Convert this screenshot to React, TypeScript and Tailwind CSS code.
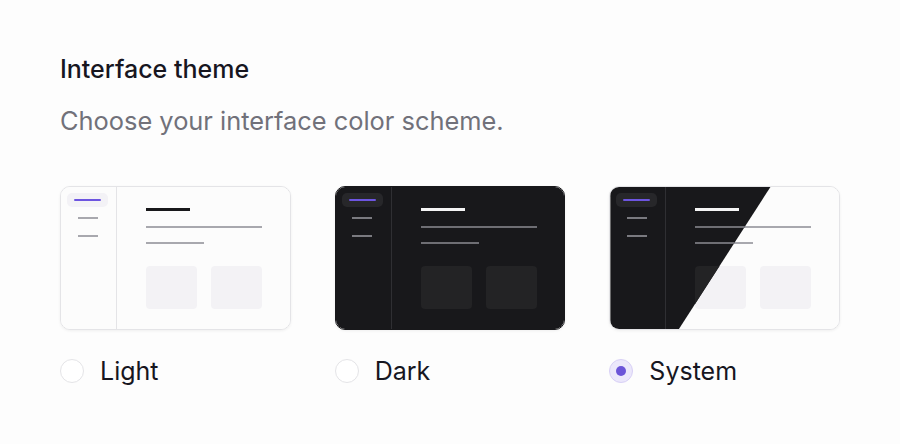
import { useState } from 'react';

type Theme = 'light' | 'dark' | 'system';

const OPTIONS: { id: Theme; label: string }[] = [
  { id: 'light', label: 'Light' },
  { id: 'dark', label: 'Dark' },
  { id: 'system', label: 'System' },
];

// mini window mock used inside each card
function Preview({ dark }: { dark?: boolean }) {
  return (
    <div className={`flex h-full w-full ${dark ? 'bg-[#18181b]' : 'bg-[#fcfcfc]'}`}>
      <div
        className={`flex w-[56px] shrink-0 flex-col items-stretch border-r pl-[6px] pr-[8px] pt-[6px] ${
          dark ? 'border-[#2f2f33]' : 'border-[#e4e4e7]'
        }`}
      >
        <div className={`flex h-[14px] items-center justify-center rounded-[5px] ${dark ? 'bg-[#27272a]' : 'bg-[#f3f2f6]'}`}>
          <span className="h-[2px] w-[27px] rounded-full bg-[#6d55e0]" />
        </div>
        <span className={`mx-auto mt-[10px] h-[2px] w-[20px] ${dark ? 'bg-[#7a7a80]' : 'bg-[#a8a8ae]'}`} />
        <span className={`mx-auto mt-[16px] h-[2px] w-[20px] ${dark ? 'bg-[#7a7a80]' : 'bg-[#a8a8ae]'}`} />
      </div>
      <div className="flex flex-1 flex-col items-start pl-[29px] pt-[21px]">
        <span className={`h-[3px] w-[44px] ${dark ? 'bg-[#f4f4f5]' : 'bg-[#18181b]'}`} />
        <span className={`mt-[15px] h-[2px] w-[116px] ${dark ? 'bg-[#6e6e74]' : 'bg-[#a8a8ae]'}`} />
        <span className={`mt-[14px] h-[2px] w-[58px] ${dark ? 'bg-[#6e6e74]' : 'bg-[#a8a8ae]'}`} />
        <div className="mt-[22px] flex gap-[14px]">
          <span className={`h-[43px] w-[51px] rounded-[4px] ${dark ? 'bg-[#232325]' : 'bg-[#f3f2f5]'}`} />
          <span className={`h-[43px] w-[51px] rounded-[4px] ${dark ? 'bg-[#232325]' : 'bg-[#f3f2f5]'}`} />
        </div>
      </div>
    </div>
  );
}

export default function App() {
  const [theme, setTheme] = useState<Theme>('system');

  return (
    <div className="min-h-screen bg-[#fdfdfd] px-[60px] pt-[54px] font-['Inter',sans-serif]">
      <h2 className="text-[25px] font-medium leading-[30px] text-[#17161f]">Interface theme</h2>
      <p className="mt-[21px] text-[25.4px] leading-[32px] text-[#71717a]">Choose your interface color scheme.</p>

      <div className="mt-[49px] flex gap-[44px]">
        {OPTIONS.map((opt) => {
          const selected = theme === opt.id;
          return (
            <button key={opt.id} type="button" onClick={() => setTheme(opt.id)} className="flex w-[231px] flex-col text-left">
              <div
                className={`relative h-[144px] w-full overflow-hidden rounded-[10px] border shadow-[0_1px_3px_rgba(0,0,0,0.06)] ${
                  opt.id === 'dark' ? 'border-[#18181b]' : 'border-[#e4e4e7]'
                }`}
              >
                <Preview dark={opt.id === 'dark'} />
                {opt.id === 'system' && (
                  <div className="absolute inset-0 [clip-path:polygon(0_0,70%_0,30%_100%,0_100%)]">
                    <Preview dark />
                  </div>
                )}
              </div>
              <div className="mt-[25px] flex items-center gap-[16px]">
                <span
                  className={`flex h-[24px] w-[24px] items-center justify-center rounded-full border-[1.5px] ${
                    selected ? 'border-[#d8d0f6] bg-[#ebe7fb]' : 'border-[#e4e4e7] bg-white'
                  }`}
                >
                  {selected && <span className="h-[10px] w-[10px] rounded-full bg-[#6b54d8]" />}
                </span>
                <span className="text-[25px] leading-[32px] text-[#17161f]">{opt.label}</span>
              </div>
            </button>
          );
        })}
      </div>
    </div>
  );
}
